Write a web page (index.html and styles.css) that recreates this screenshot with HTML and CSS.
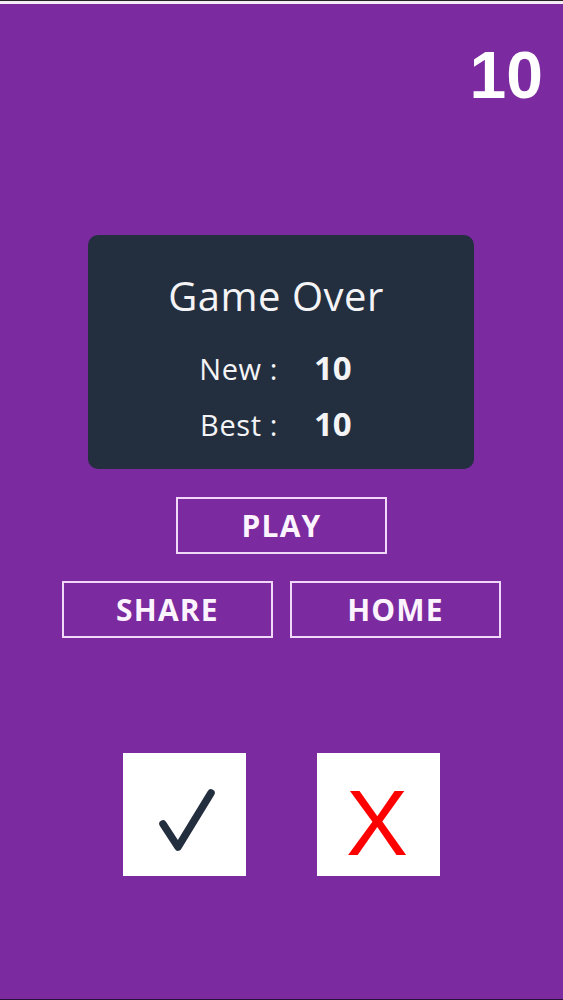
FILE: index.html
```html
<!DOCTYPE html>
<html lang="en">
<head>
<meta charset="utf-8">
<title>Game Over</title>
<link rel="stylesheet" href="styles.css">
</head>
<body>
<div class="screen">
  <div class="status-strip"></div>
  <div class="score-row"><span class="score">10</span></div>

  <section class="result-card">
    <h1 class="result-title">Game Over</h1>
    <div class="result-grid">
      <span class="result-label">New :</span><span class="result-value">10</span>
      <span class="result-label">Best :</span><span class="result-value">10</span>
    </div>
  </section>

  <div class="actions">
    <button class="action-btn">PLAY</button>
    <div class="action-pair">
      <button class="action-btn">SHARE</button>
      <button class="action-btn">HOME</button>
    </div>
  </div>

  <div class="answers">
    <div class="answer-box">
      <svg class="check-icon" width="123" height="123" viewBox="0 0 123 123" aria-hidden="true">
        <path d="M40 71 L55 94 L88 40" fill="none" stroke="#232f3e" stroke-width="7.5" stroke-linecap="round" stroke-linejoin="round"/>
      </svg>
    </div>
    <div class="answer-box answer-box--cross"><span class="cross">X</span></div>
  </div>
</div>
</body>
</html>
```

FILE: styles.css
```css
* {
  box-sizing: border-box;
}

html,
body {
  margin: 0;
  padding: 0;
  background: #1c1020;
}

.screen {
  width: 563px;
  height: 1000px;
  background: #7b2a9f;
  border-top: 1px solid #262626;
  border-bottom: 1px solid #2b0f38;
  display: flex;
  flex-direction: column;
  align-items: center;
  overflow: hidden;
}

.status-strip {
  align-self: stretch;
  height: 3px;
  background: #f3ecf6;
}

/* current score, top right */
.score-row {
  align-self: stretch;
  display: flex;
  justify-content: flex-end;
  padding-right: 20px;
  margin-top: 39px;
}

.score {
  font-family: "Liberation Sans", Arial, sans-serif;
  font-weight: 700;
  font-size: 66px;
  line-height: 65px;
  color: #ffffff;
}

/* result panel */
.result-card {
  width: 386px;
  height: 234px;
  margin-top: 127px;
  margin-right: 1px;
  background: #232f3f;
  border-radius: 10px;
  padding-top: 37px;
  display: flex;
  flex-direction: column;
  align-items: center;
  color: #f4f4f6;
  font-family: "Open Sans", "Noto Sans", sans-serif;
}

.result-title {
  margin: 0 10px 0 0;
  font-size: 40px;
  line-height: 48px;
  font-weight: 500;
  letter-spacing: 0.5px;
}

.result-grid {
  align-self: stretch;
  margin-top: 20px;
  display: grid;
  grid-template-columns: 190px auto;
  column-gap: 36px;
  align-items: baseline;
}

.result-label {
  justify-self: end;
  font-size: 29px;
  line-height: 55px;
  letter-spacing: 0.6px;
}

.result-value {
  font-size: 33px;
  line-height: 55px;
  font-weight: 700;
}

/* buttons */
.actions {
  margin-top: 28px;
  display: flex;
  flex-direction: column;
  align-items: center;
  gap: 27px;
}

.action-pair {
  display: flex;
  gap: 17px;
}

.action-btn {
  width: 211px;
  height: 57px;
  padding: 0;
  background: transparent;
  border: 2px solid #f2d8f8;
  color: #fbf3fd;
  font-family: "Open Sans", "Noto Sans", sans-serif;
  font-weight: 700;
  font-size: 30px;
  letter-spacing: 1.2px;
  line-height: 1;
}

/* answer tiles */
.answers {
  margin-top: 115px;
  display: flex;
  gap: 71px;
}

.answer-box {
  width: 123px;
  height: 123px;
  background: #ffffff;
  display: flex;
  align-items: center;
  justify-content: center;
}

.check-icon {
  display: block;
}

.answer-box--cross {
  padding-top: 18px;
  padding-right: 3px;
}

.cross {
  font-family: "Liberation Sans", Arial, sans-serif;
  font-size: 93px;
  line-height: 93px;
  color: #ff0000;
}
```
